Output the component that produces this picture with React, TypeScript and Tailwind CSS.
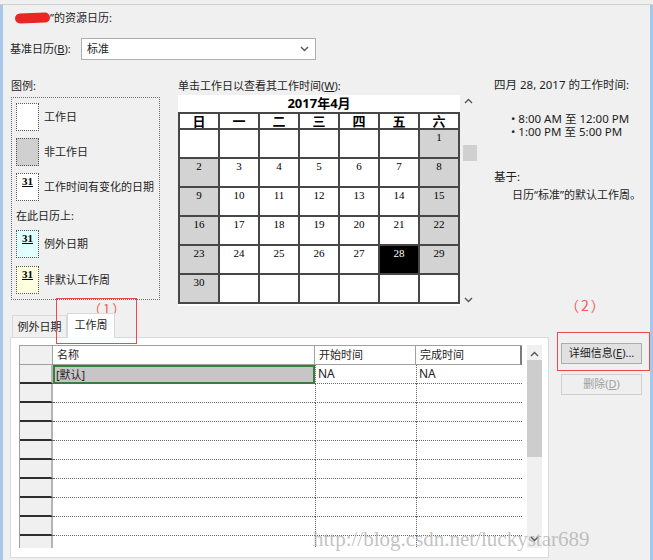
import React from 'react';

const weeks: (number | null)[][] = [
  [null, null, null, null, null, null, 1],
  [2, 3, 4, 5, 6, 7, 8],
  [9, 10, 11, 12, 13, 14, 15],
  [16, 17, 18, 19, 20, 21, 22],
  [23, 24, 25, 26, 27, 28, 29],
  [30, null, null, null, null, null, null],
];

const weekdays = ['日', '一', '二', '三', '四', '五', '六'];

function Chevron({ up }: { up?: boolean }) {
  return (
    <svg width="9" height="6" viewBox="0 0 9 6">
      <polyline
        points={up ? '1,5 4.5,1.5 8,5' : '1,1 4.5,4.5 8,1'}
        fill="none"
        stroke="#555"
        strokeWidth="1.4"
      />
    </svg>
  );
}

function Swatch({ bg, mark }: { bg: string; mark?: boolean }) {
  return (
    <div className={`w-[23px] h-[28px] shrink-0 border border-dotted border-[#555] ${bg} flex justify-center`}>
      {mark && (
        <span className="font-['Liberation_Serif',serif] font-bold text-[11px] leading-[12px] underline mt-[1px] text-black">
          31
        </span>
      )}
    </div>
  );
}

function LegendItem({ bg, mark, label }: { bg: string; mark?: boolean; label: string }) {
  return (
    <div className="flex items-center gap-[5px] h-[28px] whitespace-nowrap">
      <Swatch bg={bg} mark={mark} />
      <span>{label}</span>
    </div>
  );
}

function Calendar() {
  return (
    <div className="flex">
      <div className="w-[282px] h-[211px] bg-white">
        <div className="h-[17px] leading-[17px] text-center font-bold text-[13px] text-black">2017年4月</div>
        <div className="grid grid-cols-[repeat(7,38px)] gap-[2px] p-[2px] bg-[#474747] w-[282px]">
          {weekdays.map((w) => (
            <div key={w} className="h-[14px] leading-[14px] bg-white text-center font-bold text-[13px] text-black">
              {w}
            </div>
          ))}
          {weeks.flat().map((d, i) => {
            const col = i % 7;
            let bg = 'bg-white text-black';
            if (d !== null && (col === 0 || col === 6)) bg = 'bg-[#d3d3d3] text-black';
            if (d === 28) bg = 'bg-black text-white';
            return (
              <div
                key={i}
                className={`h-[27px] ${bg} text-center font-['Liberation_Serif',serif] text-[11px] leading-[12px] pt-[1px]`}
              >
                {d}
              </div>
            );
          })}
        </div>
      </div>
      <div className="w-[17px] h-[211px] flex flex-col">
        <div className="h-[12px] mt-[3px] flex justify-center">
          <Chevron up />
        </div>
        <div className="ml-[3px] w-[14px] h-[16px] bg-[#d0d0d0] mt-[35px]" />
        <div className="flex-1" />
        <div className="h-[12px] mb-[3px] flex justify-center items-end">
          <Chevron />
        </div>
      </div>
    </div>
  );
}

function TableRow({ first }: { first?: boolean }) {
  return (
    <div className="flex h-[19px]">
      <div className="w-[33px] bg-[#f0f0f0] border-r-2 border-r-[#b4b4b4] border-b-2 border-b-[#2e2e2e]" />
      {first ? (
        <div className="w-[262px] bg-[#c6c6c6] border-2 border-[#3b7d3b] leading-[15px] pl-[1px]">[默认]</div>
      ) : (
        <div className="w-[262px] border-b border-dotted border-[#6a6a6a]" />
      )}
      <div className="w-[101px] border-l border-b border-dotted border-[#6a6a6a] leading-[18px] pl-[2px] text-[12px]">
        {first ? 'NA' : ''}
      </div>
      <div className="w-[106px] border-l border-b border-dotted border-[#6a6a6a] leading-[18px] pl-[2px] text-[12px]">
        {first ? 'NA' : ''}
      </div>
    </div>
  );
}

function WorkWeekTable() {
  return (
    <div className="flex">
      <div className="w-[503px] h-[203px] overflow-hidden border-l border-t border-[#a0a0a0]">
        <div className="flex h-[19px]">
          <div className="w-[33px] bg-[#f0f0f0] border-r border-b border-[#a0a0a0]" />
          <div className="w-[262px] border-r border-b border-[#a0a0a0] pl-[4px] leading-[18px]">名称</div>
          <div className="w-[101px] border-r border-b border-[#a0a0a0] pl-[4px] leading-[18px]">开始时间</div>
          <div className="w-[106px] border-r-2 border-r-[#7a7a7a] border-b border-[#a0a0a0] pl-[4px] leading-[18px]">
            完成时间
          </div>
        </div>
        <TableRow first />
        {Array.from({ length: 9 }).map((_, i) => (
          <TableRow key={i} />
        ))}
      </div>
      <div className="ml-[5px] w-[15px] h-[203px] bg-[#f0f0f0] flex flex-col">
        <div className="h-[12px] mt-[3px] flex justify-center items-center">
          <Chevron up />
        </div>
        <div className="w-[15px] h-[97px] bg-[#cdcdcd]" />
        <div className="flex-1" />
        <div className="h-[12px] mb-[3px] flex justify-center items-center">
          <Chevron />
        </div>
      </div>
    </div>
  );
}

export default function App() {
  return (
    <div className="relative w-[653px] h-[560px] overflow-hidden bg-[#f0f0f0] text-[11px] text-[#1e1e1e] font-['Noto_Sans','Noto_Sans_CJK_SC',sans-serif]">
      <div className="h-[4px]" />
      <div className="flex h-[556px] border-t border-[#d0d0d0]">
        <div className="w-[3px] bg-[#a6c7e9]" />
        <div className="flex-1 flex flex-col">
          {/* title */}
          <div className="mt-[6px] pl-[12px] h-[14px] flex items-center leading-[14px]">
            <span className="w-[35px] h-[10px] rounded-full bg-[#ec2424] -rotate-2" />
            <span>”的资源日历:</span>
          </div>

          {/* base calendar */}
          <div className="mt-[13px] h-[22px] flex items-center pl-[7px]">
            <span className="w-[71px]">
              基准日历(<span className="underline">B</span>):
            </span>
            <div className="w-[235px] h-[22px] bg-white border border-[#adadad] flex items-center justify-between pl-[5px] pr-[6px]">
              <span>标准</span>
              <Chevron />
            </div>
          </div>

          {/* legend / calendar / details */}
          <div className="mt-[18px] h-[228px] flex pl-[8px]">
            <div className="w-[149px]">
              <div className="h-[19px] leading-[16px]">图例:</div>
              <div className="h-[203px] border border-dotted border-[#6d6d6d] pt-[5px] pl-[4px]">
                <LegendItem bg="bg-white" label="工作日" />
                <div className="mt-[7px]">
                  <LegendItem bg="bg-[#d0d0d0]" label="非工作日" />
                </div>
                <div className="mt-[7px]">
                  <LegendItem bg="bg-white" mark label="工作时间有变化的日期" />
                </div>
                <div className="mt-[7px] h-[16px] leading-[16px]">在此日历上:</div>
                <div className="mt-[6px]">
                  <LegendItem bg="bg-[#e0ffff]" mark label="例外日期" />
                </div>
                <div className="mt-[8px]">
                  <LegendItem bg="bg-[#ffffe0]" mark label="非默认工作周" />
                </div>
              </div>
            </div>

            <div className="ml-[18px] w-[299px]">
              <div className="h-[17px] leading-[16px]">
                单击工作日以查看其工作时间(<span className="underline">W</span>):
              </div>
              <Calendar />
            </div>

            <div className="ml-[17px] flex-1 whitespace-nowrap text-[11.5px]">
              <div className="leading-[14px]">四月 28, 2017 的工作时间:</div>
              <div className="mt-[20px] pl-[17px] leading-[13px]">
                <div>• 8:00 AM 至 12:00 PM</div>
                <div>• 1:00 PM 至 5:00 PM</div>
              </div>
              <div className="mt-[32px] leading-[14px]">基于:</div>
              <div className="mt-[4px] pl-[18px] leading-[14px] text-[11px]">日历“标准”的默认工作周。</div>
            </div>
          </div>

          {/* tabs + table + buttons */}
          <div className="mt-[7px] flex">
            <div className="ml-[7px] w-[539px]">
              <div className="h-[24px] flex items-end pl-[2px]">
                <div className="w-[55px] h-[22px] border border-b-0 border-[#d9d9d9] bg-[#f0f0f0] text-center leading-[21px]">
                  例外日期
                </div>
                <div className="relative z-10 -mb-px w-[48px] h-[25px] border border-b-0 border-[#d9d9d9] bg-white text-center leading-[22px]">
                  工作周
                </div>
              </div>
              <div className="h-[221px] border border-[#d9d9d9] bg-white pt-[7px] pl-[8px]">
                <WorkWeekTable />
              </div>
            </div>
            <div className="ml-[12px] pt-[30px] w-[81px]">
              <div className="h-[21px] bg-[#e1e1e1] border border-[#adadad] flex items-center justify-center">
                详细信息(<span className="underline">E</span>)...
              </div>
              <div className="mt-[10px] h-[21px] bg-[#efefef] border border-[#cfcfcf] flex items-center justify-center text-[#a0a0a0]">
                删除(<span className="underline">D</span>)
              </div>
            </div>
          </div>
        </div>
        <div className="w-[3px] bg-[#a6c7e9]" />
      </div>

      {/* annotations */}
      <div className="absolute left-[56px] top-[298px] w-[81px] h-[46px] border border-[#e84c4c]" />
      <div className="absolute left-[88px] top-[300px] text-[13px] leading-[18px] tracking-[2px] text-[#f05a5a] font-['Noto_Sans_CJK_SC',sans-serif]">
        （1）
      </div>
      <div className="absolute left-[557px] top-[332px] w-[93px] h-[39px] border border-[#e84c4c]" />
      <div className="absolute left-[565px] top-[296px] text-[14px] leading-[18px] tracking-[2px] text-[#f05a5a] font-['Noto_Sans_CJK_SC',sans-serif]">
        （2）
      </div>
      <div className="absolute left-[313px] top-[527px] text-[21px] leading-[24px] text-[#a8a8a8]/70 font-['Liberation_Serif',serif]">
        http://blog.csdn.net/luckystar689
      </div>
    </div>
  );
}
